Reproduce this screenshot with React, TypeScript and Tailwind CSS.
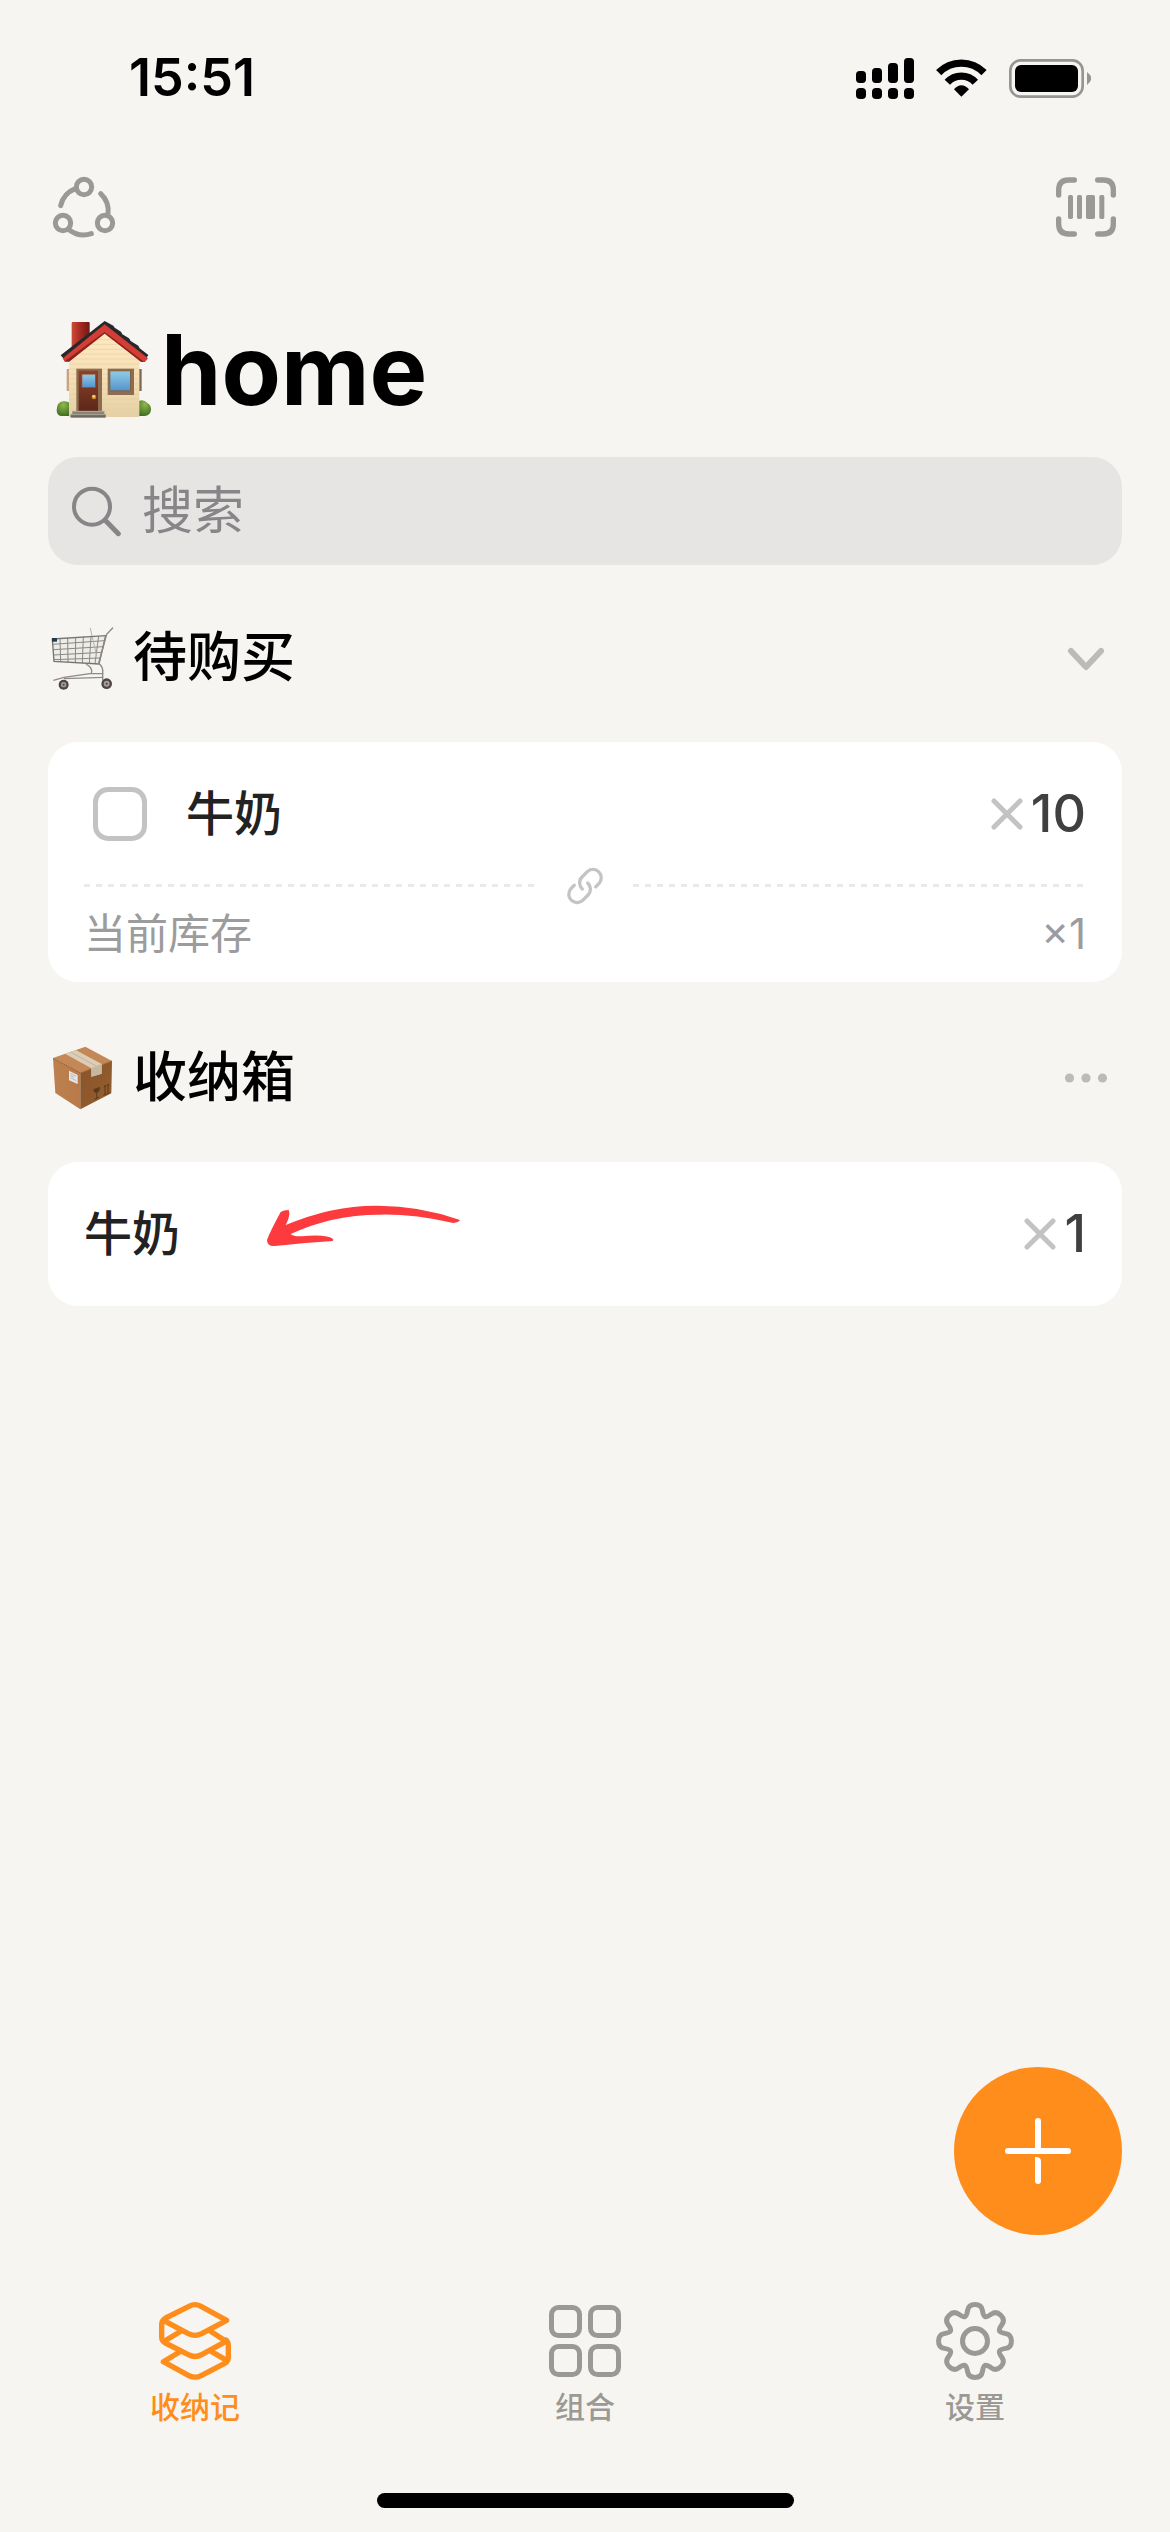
import React, { useState } from "react";

type IconProps = { className?: string };

type TabKey = "storage" | "group" | "settings";

const StatusIcons = () => (
  <div className="flex items-center gap-[22px]">
    <svg className="w-[58px] h-[41px]" viewBox="108 81 174 123">
      <rect x="108" y="120" width="30" height="36" rx="11" />
      <rect x="156" y="111" width="30" height="45" rx="11" />
      <rect x="204" y="96" width="30" height="60" rx="11" />
      <rect x="252" y="81" width="30" height="75" rx="11" />
      <rect x="108" y="171" width="30" height="33" rx="12" />
      <rect x="156" y="171" width="30" height="33" rx="12" />
      <rect x="204" y="171" width="30" height="33" rx="12" />
      <rect x="252" y="171" width="30" height="33" rx="12" />
    </svg>
    <svg className="w-[51px] h-[38px]" viewBox="348 85 153 114">
      <g fill="none" stroke="#000" strokeWidth="22">
        <path d="M356 126A95 95 0 0 1 492 126" />
        <path d="M382 155A57 57 0 0 1 466 155" />
      </g>
      <path d="M402 176Q424 151 447 176L424 198Z" />
    </svg>
    <svg className="w-[82px] h-[39px]" viewBox="567 84 246 117">
      <rect
        x="571"
        y="88"
        width="217"
        height="109"
        rx="31"
        fill="none"
        stroke="#959592"
        strokeWidth="8"
      />
      <rect x="585" y="102" width="189" height="81" rx="18" />
      <path d="M801 123Q826 142 801 162Z" fill="#959592" />
    </svg>
  </div>
);

const ShareIcon = ({ className }: IconProps) => (
  <svg
    className={className}
    viewBox="24 420 216 216"
    fill="none"
    stroke="currentColor"
    strokeWidth="15"
    strokeLinecap="round"
  >
    <circle cx="132" cy="468" r="23" />
    <circle cx="69" cy="576" r="23" />
    <circle cx="195" cy="576" r="23" />
    <path d="M62 524A72 72 0 0 1 106 473" />
    <path d="M182 488A72 72 0 0 1 204 550" />
    <path d="M154 608A72 72 0 0 1 88 597" />
  </svg>
);

const ScanIcon = ({ className }: IconProps) => (
  <svg className={className} viewBox="690 423 216 216" fill="currentColor">
    <g
      fill="none"
      stroke="currentColor"
      strokeWidth="16"
      strokeLinecap="round"
    >
      <path d="M716 495V480Q716 450 746 450H763" />
      <path d="M833 450H850Q880 450 880 480V495" />
      <path d="M880 567V582Q880 612 850 612H833" />
      <path d="M763 612H746Q716 612 716 582V567" />
    </g>
    <rect x="744" y="495" width="15" height="72" rx="5" />
    <rect x="771" y="495" width="15" height="72" rx="5" />
    <rect x="798" y="495" width="27" height="72" rx="5" />
    <rect x="838" y="495" width="15" height="72" rx="5" />
  </svg>
);

const HouseIcon = ({ className }: IconProps) => (
  <svg className={className} viewBox="36 60 306 306">
    <defs>
      <linearGradient id="wall" x1="0" y1="0" x2="0" y2="1">
        <stop offset="0" stopColor="#ffe9c4" />
        <stop offset="0.5" stopColor="#f7e0b6" />
        <stop offset="1" stopColor="#e5d0a6" />
      </linearGradient>
      <linearGradient id="door" x1="0" y1="0" x2="0" y2="1">
        <stop offset="0" stopColor="#8e4229" />
        <stop offset="1" stopColor="#5c2719" />
      </linearGradient>
      <linearGradient id="glass" x1="0" y1="0" x2="0" y2="1">
        <stop offset="0" stopColor="#8fcbe6" />
        <stop offset="1" stopColor="#5595cd" />
      </linearGradient>
      <linearGradient id="chimney" x1="0" y1="0" x2="1" y2="0">
        <stop offset="0" stopColor="#cf4a38" />
        <stop offset="0.5" stopColor="#a32a20" />
        <stop offset="1" stopColor="#6e1a14" />
      </linearGradient>
      <radialGradient id="bush" cx="0.5" cy="0.25" r="0.8">
        <stop offset="0" stopColor="#8fb84e" />
        <stop offset="1" stopColor="#3d6b1f" />
      </radialGradient>
    </defs>
    <rect x="80" y="210" width="8" height="66" fill="#c9a183" />
    <rect x="296" y="210" width="9" height="66" fill="#7d6a55" />
    <path
      d="M50 334Q50 308 70 307Q82 306 90 312V351H62Q50 348 50 334Z"
      fill="url(#bush)"
    />
    <path
      d="M296 306Q312 300 322 312Q334 318 333 334Q330 350 314 351H296Z"
      fill="url(#bush)"
    />
    <rect x="95" y="69" width="54" height="80" rx="3" fill="url(#chimney)" />
    <path d="M87 180L195 96L298 180V354H87Z" fill="url(#wall)" />
    <g stroke="#e6cfa2" strokeWidth="2">
      <path d="M166 122H226M145 136H243M130 151H262M112 165H278M92 180H294" />
      <path d="M87 195H298M87 210H298M87 225H298M87 240H298M87 255H298" />
      <path d="M87 270H298M87 285H298M87 300H298M87 315H298M87 330H298M87 345H298" />
    </g>
    <path
      d="M62 169L194 66L220 80L224 86L243 98L247 106L267 118L272 126L295 140L299 148L325 168L317 180L194 84L72 180Z"
      fill="#26292a"
    />
    <path d="M68 178L194 76L324 178L315 189H303L194 99L87 188H74Z" fill="#d33d35" />
    <path d="M74 187L194 98L312 188H303L194 104L87 188Z" fill="#8c241e" />
    <rect x="109" y="209" width="77" height="128" fill="#8d6c50" />
    <rect x="116" y="215" width="58" height="121" fill="url(#door)" />
    <rect x="125" y="225" width="42" height="41" fill="#a45b3d" />
    <rect x="127" y="227" width="38" height="37" fill="url(#glass)" />
    <circle cx="162" cy="294" r="7" fill="#c8892a" />
    <circle cx="161" cy="292" r="4" fill="#ffd468" />
    <rect x="203" y="209" width="79" height="79" fill="#8d6c50" />
    <rect x="209" y="215" width="64" height="62" fill="#7d6047" />
    <rect x="211" y="217" width="59" height="57" fill="url(#glass)" />
    <rect x="97" y="336" width="96" height="9" fill="#8b8378" />
    <rect x="92" y="345" width="105" height="11" fill="#6e675f" />
    <path d="M97 337H193M92 347H197" stroke="#b0a99d" strokeWidth="3" />
  </svg>
);

const CartIcon = ({ className }: IconProps) => (
  <svg className={className} viewBox="24 75 198 198" fill="none">
    <path
      d="M37 116L198 106L176 192L41 184Z"
      fill="#9a9a98"
      fillOpacity="0.1"
    />
    <g stroke="#8b8886" strokeWidth="3">
      <path d="M38 133L194 122M39 149L190 140M40 165L185 157M41 179L180 174" />
      <path d="M60 115L62 185M83 113L84 187M107 112L106 188M130 110L127 189M153 109L148 190M176 108L165 191" />
      <path d="M151 84L156 108L170 168" stroke="#b5b2af" />
    </g>
    <path d="M37 117L197 107L177 192L42 184Z" stroke="#777472" strokeWidth="4" />
    <path
      d="M218 84L200 103L176 190Q190 200 188 218V240"
      stroke="#8d8886"
      strokeWidth="4"
      strokeLinecap="round"
    />
    <path
      d="M138 192Q160 204 154 220L72 232L40 241M154 220L190 221M72 236L190 232"
      stroke="#908b89"
      strokeWidth="4"
    />
    <rect x="36" y="114" width="15" height="11" fill="#1d3b4f" />
    <circle cx="71" cy="254" r="15" fill="#4b4544" />
    <circle cx="71" cy="254" r="8" fill="#a69c99" />
    <circle cx="71" cy="254" r="3" fill="#4b4544" />
    <circle cx="200" cy="251" r="16" fill="#4b4544" />
    <circle cx="200" cy="251" r="9" fill="#a69c99" />
    <circle cx="200" cy="251" r="3" fill="#4b4544" />
  </svg>
);

const BoxIcon = ({ className }: IconProps) => (
  <svg className={className} viewBox="24 43 198 198">
    <defs>
      <linearGradient id="boxLeft" x1="0" y1="0" x2="1" y2="0">
        <stop offset="0" stopColor="#bd8050" />
        <stop offset="1" stopColor="#b87a48" />
      </linearGradient>
      <linearGradient id="boxRight" x1="0" y1="0" x2="1" y2="1">
        <stop offset="0" stopColor="#87532a" />
        <stop offset="1" stopColor="#95602f" />
      </linearGradient>
    </defs>
    <path d="M39 83L121 127V236L46 187Z" fill="url(#boxLeft)" />
    <path d="M121 127L216 91L214 188L121 236Z" fill="url(#boxRight)" />
    <path d="M39 82L136 48L216 91L121 127Z" fill="#c48856" />
    <path d="M39 83L121 127L216 91" fill="none" stroke="#9c663a" strokeWidth="3" />
    <path d="M75 69L107 58L185 100V129L154 138V113Z" fill="#dccdb6" />
    <path d="M154 112L185 100V129L154 138Z" fill="#c6b7a1" />
    <path d="M92 64L168 106" stroke="#b9a88e" strokeWidth="2" />
    <path d="M87 120L113 133V160L87 149Z" fill="#e8e7e6" />
    <path
      d="M91 128L109 137M91 134L102 140M91 141L109 150"
      stroke="#9c9ea3"
      strokeWidth="2"
    />
    <path d="M160 176L180 168Q180 184 170 187Q161 188 160 176Z" fill="#5d3a1e" />
    <path
      d="M170 186V202M163 206L177 200M190 194L209 186M195 190V166M204 186V162M192 170L195 164L198 168M201 166L204 160L207 164"
      fill="none"
      stroke="#5d3a1e"
      strokeWidth="3"
    />
  </svg>
);

const SearchIcon = ({ className }: IconProps) => (
  <svg
    className={className}
    viewBox="90 552 156 156"
    fill="none"
    stroke="currentColor"
    strokeLinecap="round"
  >
    <circle cx="156" cy="617" r="54" strokeWidth="12" />
    <path d="M197 659L235 698" strokeWidth="15" />
  </svg>
);

const LinkIcon = ({ className }: IconProps) => (
  <svg
    className={className}
    viewBox="-20 -20 40 40"
    fill="none"
    stroke="currentColor"
    strokeWidth="3.3"
    strokeLinecap="round"
  >
    <path d="M10.7 0.8L14.5 -3.2A8.3 8.3 0 0 0 2.8 -14.8L-3 -9A8.3 8.3 0 0 0 -2.7 3" />
    <path
      d="M10.7 0.8L14.5 -3.2A8.3 8.3 0 0 0 2.8 -14.8L-3 -9A8.3 8.3 0 0 0 -2.7 3"
      transform="rotate(180)"
    />
  </svg>
);

const TimesIcon = () => (
  <svg
    className="w-8 h-8 text-[#c3c3c3]"
    viewBox="0 0 32 32"
    stroke="currentColor"
    strokeWidth="5"
    strokeLinecap="round"
  >
    <path d="M3 3L29 29M29 3L3 29" />
  </svg>
);

const ArrowMark = ({ className }: IconProps) => (
  <svg className={className} viewBox="678 525 582 126" fill="#fd3a3d">
    <path d="M1260 570Q1256 577 1240 579Q1120 552 1020 554Q880 553 752 612Q760 620 785 619Q862 612 880 628L878 633Q800 638 704 648Q682 650 681 630Q690 605 722 546Q730 540 746 540Q753 555 737 585Q880 525 1015 527Q1140 527 1260 570Z" />
  </svg>
);

const StackIcon = ({ className }: IconProps) => (
  <svg
    className={className}
    viewBox="99 54 252 252"
    fill="none"
    stroke="currentColor"
    strokeWidth="16"
    strokeLinecap="round"
    strokeLinejoin="round"
  >
    <path d="M136 121L205 158Q225 168 245 158L320 118L243 76Q225 66 207 76L137 111Q125 118 125 131V168Q125 180 136 186L205 221Q225 232 245 221L318 181L275 153" />
    <path d="M180 152L134 180" />
    <path d="M318 177Q325 182 325 194V230Q325 241 314 247L245 283Q225 294 205 283L130 242L180 212" />
    <path d="M275 212L316 236" />
  </svg>
);

const GridIcon = ({ className }: IconProps) => (
  <svg
    className={className}
    viewBox="0 0 84 84"
    fill="none"
    stroke="currentColor"
    strokeWidth="5"
  >
    <rect x="8.5" y="8.5" width="28" height="28" rx="7" />
    <rect x="47.5" y="8.5" width="28" height="28" rx="7" />
    <rect x="8.5" y="47.5" width="28" height="28" rx="7" />
    <rect x="47.5" y="47.5" width="28" height="28" rx="7" />
  </svg>
);

// eight rounded teeth, curves run through the middle of each edge
const gearPath = () => {
  const points: number[][] = [];
  for (let i = 0; i < 8; i++) {
    const teeth = [
      [-18.4, 26.5],
      [-10, 37],
      [10, 37],
      [18.4, 26.5],
    ];
    teeth.forEach(([deg, r]) => {
      const a = ((i * 45 + deg) * Math.PI) / 180;
      points.push([Math.sin(a) * r, -Math.cos(a) * r]);
    });
  }
  const mid = (a: number[], b: number[]) =>
    `${(a[0] + b[0]) / 2} ${(a[1] + b[1]) / 2}`;
  const last = points[points.length - 1];
  const curves = points.map(
    (p, i) => `Q${p[0]} ${p[1]} ${mid(p, points[(i + 1) % points.length])}`
  );
  return `M${mid(last, points[0])}${curves.join("")}Z`;
};

const GearIcon = ({ className }: IconProps) => (
  <svg
    className={className}
    viewBox="-42 -42 84 84"
    fill="none"
    stroke="currentColor"
    strokeWidth="5"
  >
    <path d={gearPath()} />
    <circle r="12.5" />
  </svg>
);

const SectionHeader = ({
  icon,
  title,
  action,
}: {
  icon: React.ReactNode;
  title: string;
  action: React.ReactNode;
}) => (
  <div className="flex items-center justify-between h-[120px] mb-6 pr-3">
    <h2 className="flex items-center gap-[19px] text-[54px] leading-[60px] font-medium">
      {icon}
      {title}
    </h2>
    {action}
  </div>
);

const Quantity = ({ value }: { value: number }) => (
  <span className="flex items-center gap-2 text-[52px] leading-[54px] font-medium text-[#404040]">
    <TimesIcon />
    {value}
  </span>
);

const DashedLine = () => (
  <div className="flex-1 h-[3px] bg-[repeating-linear-gradient(90deg,#e9e9e9_0_6px,transparent_6px_12px)]" />
);

const tabs: {
  key: TabKey;
  label: string;
  Icon: (props: IconProps) => React.ReactElement;
}[] = [
  { key: "storage", label: "收纳记", Icon: StackIcon },
  { key: "group", label: "组合", Icon: GridIcon },
  { key: "settings", label: "设置", Icon: GearIcon },
];

const App = () => {
  const [activeTab, setActiveTab] = useState<TabKey>("storage");
  const [keyword, setKeyword] = useState("");
  const [bought, setBought] = useState(false);
  const [isOpen, setIsOpen] = useState(true);

  return (
    <div className="relative min-h-screen flex flex-col bg-[#f6f5f1] text-black font-[Inter,'Noto_Sans_CJK_SC',sans-serif]">
      <div className="flex items-center justify-between h-[156px] pl-[129px] pr-[79px]">
        <span className="text-[52px] leading-[60px] font-semibold">15:51</span>
        <StatusIcons />
      </div>

      <header className="px-12">
        <div className="flex items-center justify-between h-[102px] text-[#9a9995]">
          <button type="button" aria-label="共享">
            <ShareIcon className="w-[72px] h-[72px]" />
          </button>
          <button type="button" aria-label="扫码">
            <ScanIcon className="w-[72px] h-[72px]" />
          </button>
        </div>

        <h1 className="flex items-center gap-[7px] h-24 mt-16 pl-1 text-[97px] leading-[96px] font-bold">
          <HouseIcon className="w-[102px] h-[102px]" />
          home
        </h1>

        <label className="flex items-center gap-5 h-[108px] mt-[39px] px-[22px] rounded-[30px] bg-[#e6e5e3] text-[#868689]">
          <SearchIcon className="w-[52px] h-[52px]" />
          <input
            type="search"
            aria-label="搜索"
            placeholder="搜索"
            value={keyword}
            onChange={(e) => setKeyword(e.target.value)}
            className="flex-1 min-w-0 bg-transparent text-[51px] leading-[60px] outline-none placeholder:text-[#868689]"
          />
        </label>
      </header>

      <main className="flex-1 flex flex-col gap-9 px-12 pt-[33px]">
        <section>
          <SectionHeader
            icon={<CartIcon className="w-[66px] h-[66px]" />}
            title="待购买"
            action={
              <button
                type="button"
                aria-label="展开"
                onClick={() => setIsOpen(!isOpen)}
              >
                <svg
                  className="w-12 h-12"
                  viewBox="0 0 48 48"
                  fill="none"
                  stroke="#bcbbb8"
                  strokeWidth="6"
                  strokeLinecap="round"
                  strokeLinejoin="round"
                >
                  <path d="M9 17L24 33L39 17" />
                </svg>
              </button>
            }
          />
          {isOpen && (
            <div className="px-9 pt-[45px] pb-[18px] rounded-[30px] bg-white">
              <div className="flex items-center justify-between pb-[26px]">
                <label className="flex items-center gap-[39px] pl-[9px] text-[48px] leading-[54px] font-medium text-[#222]">
                  <input
                    type="checkbox"
                    checked={bought}
                    onChange={() => setBought(!bought)}
                    className="appearance-none w-[54px] h-[54px] border-[5px] border-[#c3c3c3] rounded-[15px] checked:bg-[#c3c3c3]"
                  />
                  牛奶
                </label>
                <Quantity value={10} />
              </div>
              <div className="flex items-center h-[37px]">
                <DashedLine />
                <LinkIcon className="w-10 h-10 mx-7 text-[#c4c4c4]" />
                <DashedLine />
              </div>
              <div className="flex items-center justify-between h-[60px] text-[42px] leading-[60px] text-[#9c9c9c]">
                <span>当前库存</span>
                <span>×1</span>
              </div>
            </div>
          )}
        </section>

        <section>
          <SectionHeader
            icon={<BoxIcon className="w-[66px] h-[66px]" />}
            title="收纳箱"
            action={
              <button type="button" aria-label="更多">
                <svg className="w-12 h-12" viewBox="0 0 48 48" fill="#bcbbb8">
                  <circle cx="7.5" cy="24" r="4.6" />
                  <circle cx="24" cy="24" r="4.6" />
                  <circle cx="40.5" cy="24" r="4.6" />
                </svg>
              </button>
            }
          />
          <div className="relative flex items-center justify-between h-36 px-9 rounded-[30px] bg-white">
            <span className="text-[48px] leading-[54px] font-medium text-[#222]">
              牛奶
            </span>
            <ArrowMark className="absolute left-[218px] top-[43px] w-[194px] h-[42px]" />
            <Quantity value={1} />
          </div>
        </section>
      </main>

      <button
        type="button"
        aria-label="添加"
        className="absolute right-12 bottom-[297px] flex items-center justify-center w-[168px] h-[168px] rounded-full bg-[#ff8d1c]"
      >
        <svg className="w-[66px] h-[66px]" viewBox="195 204 198 198" fill="#fff">
          <rect x="195" y="294" width="198" height="18" rx="9" />
          <path d="M285 304V213A9 9 0 0 1 303 213V304Z" />
          <path d="M285 321H290Q303 322 303 334V393A9 9 0 0 1 285 393Z" />
        </svg>
      </button>

      <nav className="grid grid-cols-3 pb-[66px]">
        {tabs.map(({ key, label, Icon }) => (
          <button
            key={key}
            type="button"
            onClick={() => setActiveTab(key)}
            className={`flex flex-col items-center gap-1 text-[30px] leading-[40px] font-medium ${
              activeTab === key ? "text-[#ff8d1c]" : "text-[#9a9995]"
            }`}
          >
            <Icon className="w-[84px] h-[84px]" />
            {label}
          </button>
        ))}
      </nav>
      <div className="w-[417px] h-[15px] mx-auto mb-6 rounded-full bg-black" />
    </div>
  );
};

export default App;
